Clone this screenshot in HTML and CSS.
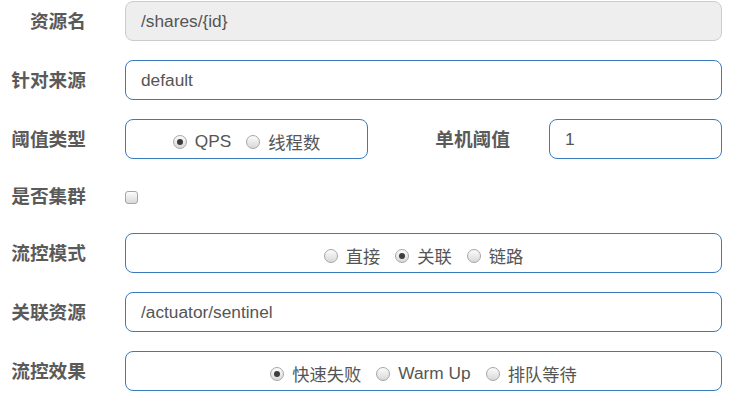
FILE: index.html
```html
<!DOCTYPE html>
<html lang="zh-CN">
<head>
    <meta charset="UTF-8">
    <title>流控规则</title>
    <link rel="stylesheet" href="styles.css">
</head>
<body>
<form class="rule-form">
    <div class="row">
        <label class="row-label">资源名</label>
        <input class="field field-readonly" type="text" value="/shares/{id}" readonly>
    </div>
    <div class="row">
        <label class="row-label">针对来源</label>
        <input class="field" type="text" value="default">
    </div>
    <div class="row row-split">
        <label class="row-label">阈值类型</label>
        <div class="field radio-box">
            <label class="radio"><input type="radio" name="grade" checked>QPS</label>
            <label class="radio"><input type="radio" name="grade">线程数</label>
        </div>
        <label class="row-label">单机阈值</label>
        <input class="field" type="text" value="1">
    </div>
    <div class="row row-check">
        <label class="row-label">是否集群</label>
        <div><input class="check" type="checkbox"></div>
    </div>
    <div class="row">
        <label class="row-label">流控模式</label>
        <div class="field radio-box">
            <label class="radio"><input type="radio" name="strategy">直接</label>
            <label class="radio"><input type="radio" name="strategy" checked>关联</label>
            <label class="radio"><input type="radio" name="strategy">链路</label>
        </div>
    </div>
    <div class="row">
        <label class="row-label">关联资源</label>
        <input class="field" type="text" value="/actuator/sentinel">
    </div>
    <div class="row">
        <label class="row-label">流控效果</label>
        <div class="field radio-box">
            <label class="radio"><input type="radio" name="behavior" checked>快速失败</label>
            <label class="radio"><input type="radio" name="behavior">Warm Up</label>
            <label class="radio"><input type="radio" name="behavior">排队等待</label>
        </div>
    </div>
</form>
</body>
</html>
```

FILE: styles.css
```css
*{
    margin: 0;
    padding: 0;
    box-sizing: border-box;
}
body{
    background: #fff;
    font-family: "Liberation Sans", "Noto Sans CJK SC", sans-serif;
    color: #555;
}
.rule-form{
    display: flex;
    flex-direction: column;
    gap: 19px;
    padding: 1px 17px 0 0;
}
.row{
    display: grid;
    grid-template-columns: 86px 1fr;
    column-gap: 39px;
    align-items: center;
    height: 40px;
}
.row-split{
    grid-template-columns: 86px 243px 103px 1fr;
}
.row-check{
    height: 36px;
}
.row-label{
    text-align: right;
    font-size: 18.7px;
    font-weight: bold;
    line-height: 22px;
    color: #5a5a5a;
    padding-top: 1px;
    white-space: nowrap;
}
.field{
    width: 100%;
    height: 40px;
    border: 1px solid #3a7bbd;
    border-radius: 8px;
    background: #fff;
    padding: 0 15px;
    font-family: inherit;
    font-size: 17.3px;
    color: #555;
    outline: none;
}
.field-readonly{
    background: #eee;
    border-color: #ccc;
}
.radio-box{
    display: flex;
    justify-content: center;
    align-items: center;
    gap: 15px;
    padding-top: 5px;
}
.radio{
    display: inline-flex;
    align-items: center;
    gap: 8px;
    font-size: 17.3px;
    color: #555;
}
.radio input{
    appearance: none;
    -webkit-appearance: none;
    width: 14px;
    height: 14px;
    border-radius: 50%;
    border: 1px solid #a6a6a6;
    background: linear-gradient(#fcfcfc, #d8d8d8);
    display: grid;
    place-items: center;
}
.radio input:checked::after{
    content: "";
    width: 6px;
    height: 6px;
    border-radius: 50%;
    background: #3c3c3c;
}
.check{
    appearance: none;
    -webkit-appearance: none;
    display: block;
    width: 13px;
    height: 13px;
    border: 1px solid #a6a6a6;
    border-radius: 3px;
    background: linear-gradient(#fcfcfc, #d8d8d8);
    margin-top: 2px;
}
```
